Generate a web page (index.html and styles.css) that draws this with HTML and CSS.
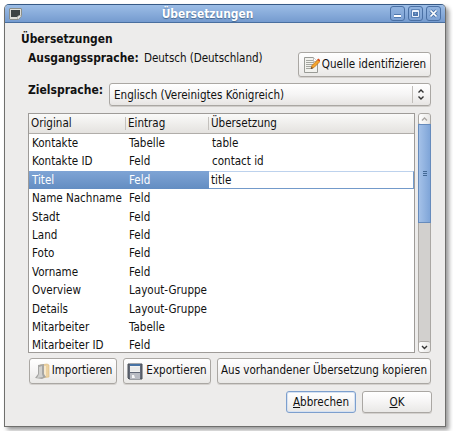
FILE: index.html
```html
<!DOCTYPE html>
<html lang="de">
<head>
<meta charset="utf-8">
<title>Übersetzungen</title>
<link rel="stylesheet" href="styles.css">
</head>
<body>
<div class="window">
  <header class="titlebar">
    <svg class="app-icon" width="13" height="12" viewBox="0 0 13 12"><path d="M1 .5h11q.5 0 .5.5v7l-3 3.500H1q-.5 0-.5-.5V1Q.5.500 1 .5z" fill="#deded8" stroke="#8b8f8b"/><path d="M2 2h9v5L8 9H2z" fill="#3e4444"/><path d="M8.500 11l.5-3 3.500-.5" fill="#fff" stroke="#a2a39c" stroke-width=".7"/></svg>
    <h1>Übersetzungen</h1>
    <div class="controls">
      <span class="control"><svg width="13" height="13"><path d="M3 9h7" stroke="#5078ad" stroke-width="4"/><path d="M3 9h7" stroke="#fff" stroke-width="2"/></svg></span>
      <span class="control"><svg width="13" height="13"><path d="M4 4h5v5H4z" fill="none" stroke="#5078ad" stroke-width="3.500"/><path d="M3.500 3.500h6v6h-6zM3 4.500h7" fill="none" stroke="#eef4fd"/></svg></span>
      <span class="control"><svg width="13" height="13"><path d="M3.500 3.500l6 6M9.500 3.500l-6 6" stroke="#5078ad" stroke-width="3.500"/><path d="M3.500 3.500l6 6M9.500 3.500l-6 6" stroke="#fff" stroke-width="1.700"/></svg></span>
    </div>
  </header>
  <main class="content">
    <h2>Übersetzungen</h2>
    <div class="source">
      <b class="source-label">Ausgangssprache:</b><span class="source-value">Deutsch (Deutschland)</span>
      <button class="button identify"><svg width="17" height="18" viewBox="0 0 17 18"><path d="M1.500 1.500h9l4 4v11h-13z" fill="#f2f2ee" stroke="#999b96"/><path d="M3 4.500h7M3 6.500h8M3 8.500h8M3 10.500h6M3 12.500h5" stroke="#a4a6a1"/><path d="M10.500 1.500v4h4" fill="#fff" stroke="#bbb"/><path d="M8 12.500l1-3 6-6 2 2-6 6z" fill="#f4a52c" stroke="#bd6813" stroke-width=".7"/><path d="M14 4l1.500-1.500 1.500 1.500v1.500z" fill="#d9481e"/><path d="M8 13l.7-2 1.300 1.200z" fill="#333"/></svg><span>Quelle identifizieren</span></button>
    </div>
    <div class="target">
      <b class="target-label">Zielsprache:</b>
      <div class="combo"><span>Englisch (Vereinigtes Königreich)</span><svg width="18" height="17"><path d="M.5 0v17" stroke="#c1beba"/><path d="M6.500 6.500l2.500-2.500 2.500 2.500M6.500 10.500l2.500 2.500 2.500-2.500" fill="none" stroke="#333" stroke-width="1.400"/></svg></div>
    </div>
    <div class="list">
      <div class="table">
        <div class="row head"><span>Original</span><span>Eintrag</span><span>Übersetzung</span></div>
        <div class="row"><span>Kontakte</span><span>Tabelle</span><span>table</span></div>
        <div class="row"><span>Kontakte ID</span><span>Feld</span><span>contact id</span></div>
        <div class="row selected"><span>Titel</span><span>Feld</span><span class="editor">title</span></div>
        <div class="row"><span>Name Nachname</span><span>Feld</span></div>
        <div class="row"><span>Stadt</span><span>Feld</span></div>
        <div class="row"><span>Land</span><span>Feld</span></div>
        <div class="row"><span>Foto</span><span>Feld</span></div>
        <div class="row"><span>Vorname</span><span>Feld</span></div>
        <div class="row"><span>Overview</span><span>Layout-Gruppe</span></div>
        <div class="row"><span>Details</span><span>Layout-Gruppe</span></div>
        <div class="row"><span>Mitarbeiter</span><span>Tabelle</span></div>
        <div class="row"><span>Mitarbeiter ID</span><span>Feld</span></div>
      </div>
      <div class="scrollbar">
        <span class="step up"><svg width="11" height="10"><path d="M3 6.500l2.500-2.500 2.500 2.500" fill="none" stroke="#aaa7a3" stroke-width="1.300"/></svg></span>
        <span class="thumb"><i></i></span>
        <span class="step down"><svg width="11" height="10"><path d="M3 4l2.500 2.500 2.500-2.500" fill="none" stroke="#333" stroke-width="1.400"/></svg></span>
      </div>
    </div>
    <div class="actions">
      <button class="button import"><svg width="16" height="17" viewBox="0 0 16 17"><path d="M6 2l7-1 2 1v12l-8 1z" fill="#ecd2a2" stroke="#dcb878" stroke-width=".6"/><path d="M8 3h4v10H8z" fill="#f7e9cd"/><path d="M4 2l6-1v10l2 3-4 2-7-1 3-4z" fill="#a6a6a4"/><path d="M5 4l3-1v8l1 3-6 1 2-4z" fill="#d0d0ce"/></svg><span>Importieren</span></button>
      <button class="button export"><svg width="16" height="17" viewBox="0 0 16 17"><path d="M1 1h14v15H2l-1-1z" fill="#626977" stroke="#4a5059"/><path d="M3 1h10v8H3z" fill="#f3f3f1"/><path d="M3 1h10v2H3z" fill="#4773a5"/><path d="M3 5h10M3 7h10" stroke="#dfe1e2"/><path d="M3 10h10v6H3z" fill="#b9bcc3"/><path d="M5 12h2l1 3H5z" fill="#f6f6f6"/></svg><span>Exportieren</span></button>
      <button class="button copy"><span>Aus vorhandener Übersetzung kopieren</span></button>
    </div>
    <div class="dialog-actions">
      <button class="button cancel"><span><u>A</u>bbrechen</span></button>
      <button class="button ok"><span><u>O</u>K</span></button>
    </div>
  </main>
</div>
</body>
</html>
```

FILE: styles.css
```css
* { box-sizing: border-box; }
body { margin: 0; background: #fff; overflow: hidden; font: 11.55px/16px "DejaVu Sans Condensed", "DejaVu Sans", sans-serif; font-stretch: condensed; color: #111; }
.window { width: 442px; height: 423px; margin: 4px; background: #edeceb; border: 1px solid #6f6f6d; border-top-color: #365985; border-radius: 5px 5px 0 0; box-shadow: 3px 3px 4px rgba(0,0,0,.4); }
.titlebar { display: flex; align-items: center; height: 18px; padding: 0 4px; background: linear-gradient(#9cbde6, #759bcf); border-bottom: 1px solid #496f9f; border-radius: 4px 4px 0 0; }
.app-icon { flex: none; }
h1 { flex: 1; margin: 0; padding-left: 3px; text-align: center; font-size: 11.9px; line-height: 16px; color: #fff; text-shadow: 0 1px 1px #45678f; }
.controls { display: flex; gap: 3px; }
.control { width: 15px; height: 15px; border: 1px solid #4a70a4; border-radius: 3px; background: linear-gradient(#91b3df, #7da2d4); }
.control svg { display: block; }
.content { padding: 8px 14px 0 16px; }
h2 { margin: 0; height: 17px; font-size: 11.9px; line-height: 16px; }
.source { display: flex; height: 30px; padding-left: 7px; align-items: flex-start; line-height: 20px; }
.source-label { width: 116px; font-size: 11.9px; }
.source-value { flex: 1; letter-spacing: -.04px; }
.button { display: flex; align-items: center; justify-content: center; flex: none; margin: 0; padding: 0; font: inherit; line-height: 16px; color: #111; white-space: nowrap; border: 1px solid #aaa7a3; border-radius: 3px; background: linear-gradient(#fff, #f6f5f5 48%, #e9e8e6); box-shadow: 0 1px #d4d1ce; }
.identify { width: 133px; height: 25px; margin-top: 4px; }
.identify svg { margin-right: 2px; }
.identify span, .import span, .export span, .copy span { margin-top: -2px; }
.target { display: flex; height: 30px; margin-top: 5px; padding-left: 7px; }
.target-label { width: 81px; font-size: 12px; line-height: 14px; white-space: nowrap; }
.combo { display: flex; justify-content: space-between; align-items: center; width: 322px; height: 23px; padding-left: 4px; border: 1px solid #aaa7a3; border-radius: 3px; background: linear-gradient(#fff, #f6f5f5 48%, #e7e5e3); box-shadow: 0 1px #d0cdca; }
.list { display: flex; gap: 3px; height: 240px; margin-left: 7px; }
.table { width: 389px; overflow: hidden; border: 1px solid #9e9b98; background: #fff; }
.row { display: grid; grid-template-columns: 97px 83px 1fr; height: 18.4px; line-height: 18px; white-space: nowrap; }
.row > span { padding-left: 3px; }
.head { height: 20px; line-height: 19px; border-bottom: 1px solid #b0ada9; background: linear-gradient(#fafaf9, #e4e2df); }
.head > span { padding-left: 2px; }
.head > span + span { position: relative; }
.head > span + span::before { content: ""; position: absolute; left: -1px; top: 3px; height: 13px; border-left: 1px solid #c4c1bd; }
.selected { color: #fff; background: linear-gradient(#7fa4d5, #638dc2); }
.row > .editor { color: #111; background: #fff; border: 1px solid #739aca; border-top-color: #bdd2ed; border-left: 0; line-height: 16px; padding-left: 2px; }
.scrollbar { display: flex; flex-direction: column; width: 13px; border: 1px solid #aaa7a3; border-radius: 3px; background: #d2d0ce; }
.step { height: 10px; flex: none; background: linear-gradient(90deg,#fff,#e8e7e5); border-radius: 2px; }
.step svg { display: block; }
.thumb { display: flex; align-items: center; justify-content: center; height: 99px; margin: 0 -1px; border: 1px solid #668bbc; background: linear-gradient(90deg,#a4c1e8,#7fa5d8); }
.thumb i { width: 4px; height: 5px; background: repeating-linear-gradient(#446995 0 1px, transparent 1px 2px); }
.down { height: 11px; margin-top: auto; border-top: 1px solid #aaa7a3; }
.actions { display: flex; gap: 6px; margin: 5px 0 0 8px; }
.actions .button { height: 26px; }
.import, .export { width: 88px; }
.import svg { margin-right: 2px; }
.export svg { margin-right: 3px; }
.copy { width: 214px; }
.dialog-actions { display: flex; justify-content: flex-end; gap: 6px; margin: 7px -1px 0 0; }
.dialog-actions .button { width: 70px; height: 22px; }
.dialog-actions .cancel { border-color: #7d9fcd; box-shadow: inset 0 0 0 1px #d6e2f2; }
u { text-decoration-thickness: 1px; text-underline-offset: 1px; }
```
